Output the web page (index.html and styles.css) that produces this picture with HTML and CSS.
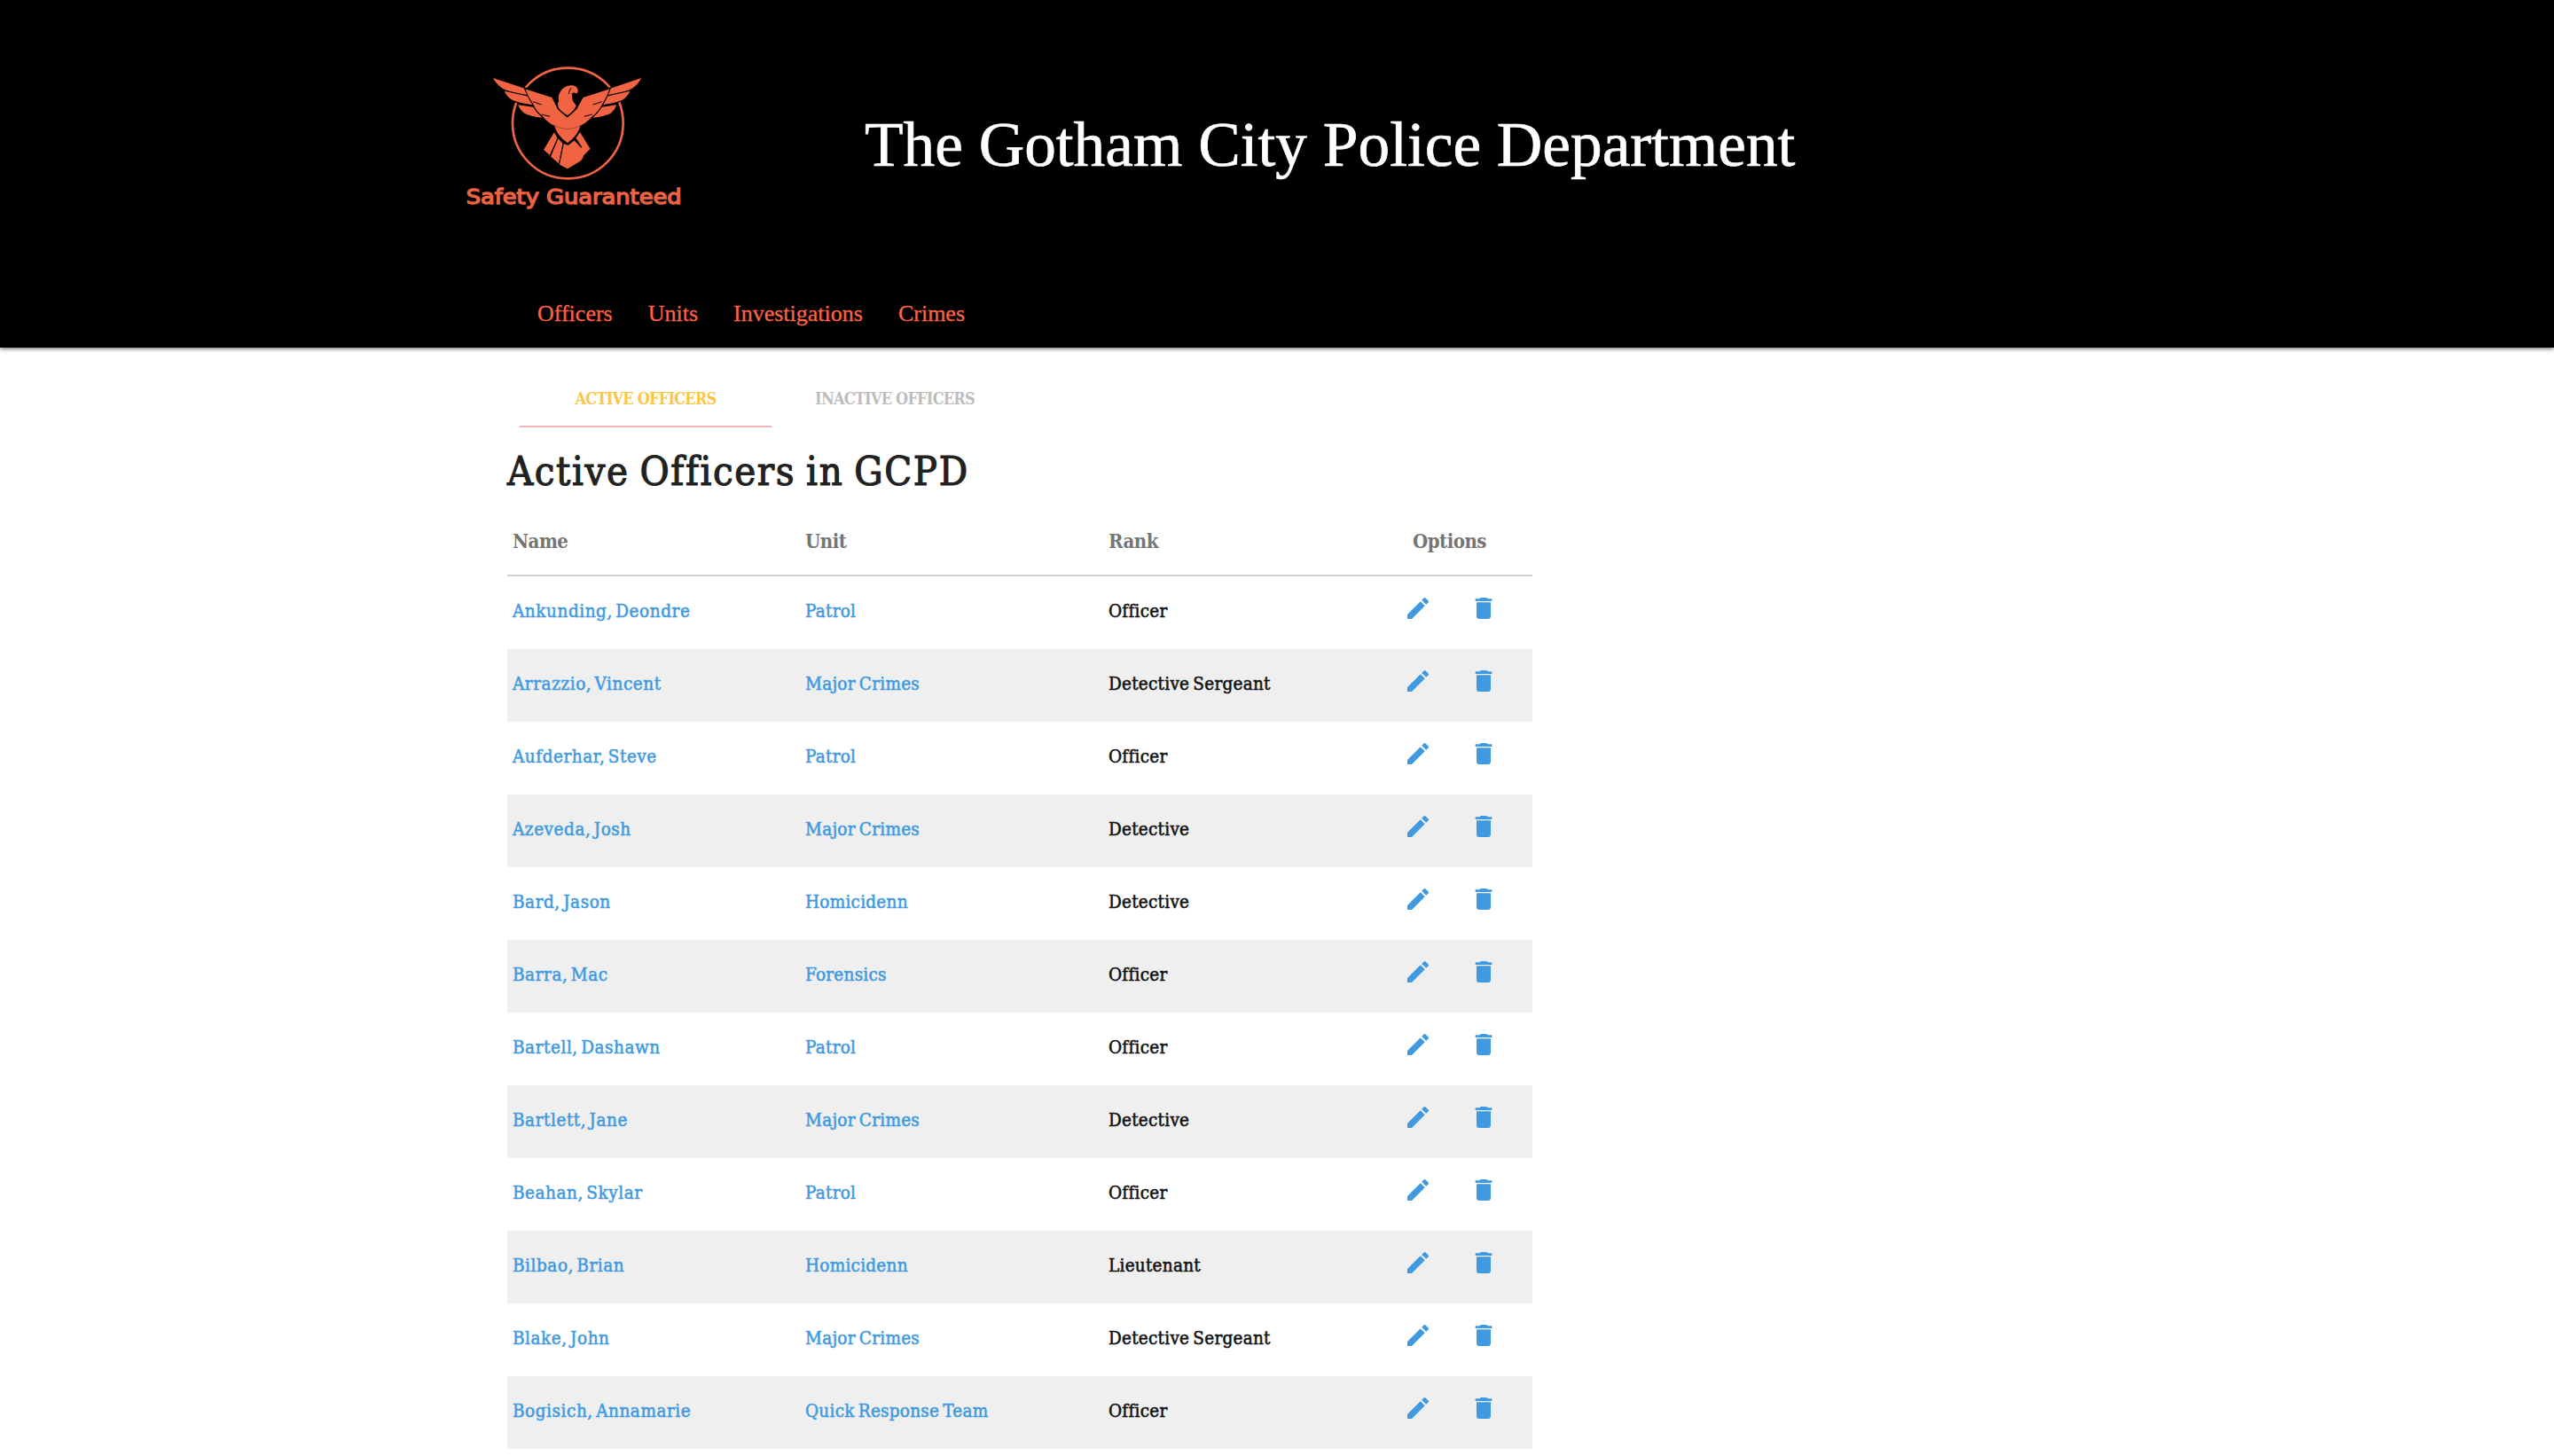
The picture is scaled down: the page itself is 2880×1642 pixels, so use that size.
FILE: index.html
```
<!DOCTYPE html>
<html lang="en">
<head>
<meta charset="utf-8">
<title>The Gotham City Police Department</title>
<link rel="stylesheet" href="styles.css">
</head>
<body>
<svg class="sprite" aria-hidden="true">
  <symbol id="edit" viewBox="0 0 24 24"><path d="M3 17.250V21h3.750L17.810 9.940l-3.750-3.750L3 17.250zM20.710 7.040c.39-.39.39-1.020 0-1.410l-2.340-2.340c-.39-.39-1.020-.39-1.410 0l-1.830 1.830 3.750 3.750 1.830-1.830z"/></symbol>
  <symbol id="trash" viewBox="0 0 24 24"><path d="M6 19c0 1.100.9 2 2 2h8c1.100 0 2-.9 2-2V7H6v12zM19 4h-3.500l-1-1h-5l-1 1H5v2h14V4z"/></symbol>
</svg>

<header class="site-header">
  <div class="brand">
    <svg class="logo" viewBox="0 0 840 570" role="img" aria-label="Safety Guaranteed">
      <circle cx="391" cy="237" r="187" fill="none" stroke="#f16443" stroke-width="8"/>
      <g stroke="#000" stroke-width="3.5" stroke-linejoin="round">
        <!-- outer feathers, left and right -->
        <path d="M134 81L248 118L262 148Q190 133 168 120Q147 105 134 81Z"/>
        <path d="M173 126L262 145L280 178Q222 170 202 160Q182 148 173 126Z"/>
        <path d="M220 172L278 181L308 221Q256 214 241 203Q225 190 220 172Z"/>
        <path d="M643 81L532 118L518 148Q590 133 611 120Q632 105 643 81Z"/>
        <path d="M604 126L518 145L500 178Q556 170 576 160Q596 148 604 126Z"/>
        <path d="M559 172L502 181L471 221Q525 214 539 203Q553 190 559 172Z"/>
        <!-- tail -->
        <path d="M345 264L358 288L330 348L307 327Z"/>
        <path d="M358 286L376 305L361 376L331 350Z"/>
        <path d="M376 304L391 310L413 293L437 318L416 287L432 264L469 324L446 347Q443 363 429 370L390 393L361 378Z"/>
        <!-- wings and body -->
        <path d="M244 118L338 148L358 188L389 216L420 188L442 148L535 118Q524 150 508 175Q496 199 474 216Q454 239 435 246Q427 280 390 306Q352 280 344 246Q323 239 302 212Q282 198 272 172Q255 148 244 118Z"/>
        <!-- head -->
        <path d="M357 184L355 168Q361 163 357 150Q360 127 377 115Q389 105 406 107Q426 109 427 126Q426 138 418 139Q414 132 406 137L409 160L421 177Q414 198 390 212Q368 201 357 184Z"/>
      </g>
      <g fill="none" stroke="#000" stroke-width="3">
        <path d="M402 118Q395 126 394 138M273 164L302 174M302 207L330 214M506 164L476 174M474 207L446 214"/>
        <path d="M346 245Q390 268 434 245" stroke="#8f3521" stroke-width="2"/>
      </g>
      <text class="tagline" x="47" y="510" textLength="729" lengthAdjust="spacingAndGlyphs">Safety Guaranteed</text>
    </svg>
    <h1 class="title">The Gotham City Police Department</h1>
  </div>
  <nav class="nav">
    <a>Officers</a><a>Units</a><a>Investigations</a><a>Crimes</a>
  </nav>
</header>

<main class="content">
  <div class="tabs">
    <a class="tab tab-active">ACTIVE OFFICERS</a>
    <a class="tab tab-inactive">INACTIVE OFFICERS</a>
  </div>
  <h2 class="heading">Active Officers in GCPD</h2>
  <table class="officers">
    <colgroup><col class="c-name"><col class="c-unit"><col class="c-rank"><col class="c-options"></colgroup>
    <thead><tr><th>Name</th><th>Unit</th><th>Rank</th><th class="options">Options</th></tr></thead>
    <tbody>
      <tr><td><a class="name">Ankunding, Deondre</a></td><td><a>Patrol</a></td><td>Officer</td><td class="actions"><svg><use href="#edit"/></svg><svg><use href="#trash"/></svg></td></tr>
      <tr><td><a class="name">Arrazzio, Vincent</a></td><td><a>Major Crimes</a></td><td>Detective Sergeant</td><td class="actions"><svg><use href="#edit"/></svg><svg><use href="#trash"/></svg></td></tr>
      <tr><td><a class="name">Aufderhar, Steve</a></td><td><a>Patrol</a></td><td>Officer</td><td class="actions"><svg><use href="#edit"/></svg><svg><use href="#trash"/></svg></td></tr>
      <tr><td><a class="name">Azeveda, Josh</a></td><td><a>Major Crimes</a></td><td>Detective</td><td class="actions"><svg><use href="#edit"/></svg><svg><use href="#trash"/></svg></td></tr>
      <tr><td><a class="name">Bard, Jason</a></td><td><a>Homicidenn</a></td><td>Detective</td><td class="actions"><svg><use href="#edit"/></svg><svg><use href="#trash"/></svg></td></tr>
      <tr><td><a class="name">Barra, Mac</a></td><td><a>Forensics</a></td><td>Officer</td><td class="actions"><svg><use href="#edit"/></svg><svg><use href="#trash"/></svg></td></tr>
      <tr><td><a class="name">Bartell, Dashawn</a></td><td><a>Patrol</a></td><td>Officer</td><td class="actions"><svg><use href="#edit"/></svg><svg><use href="#trash"/></svg></td></tr>
      <tr><td><a class="name">Bartlett, Jane</a></td><td><a>Major Crimes</a></td><td>Detective</td><td class="actions"><svg><use href="#edit"/></svg><svg><use href="#trash"/></svg></td></tr>
      <tr><td><a class="name">Beahan, Skylar</a></td><td><a>Patrol</a></td><td>Officer</td><td class="actions"><svg><use href="#edit"/></svg><svg><use href="#trash"/></svg></td></tr>
      <tr><td><a class="name">Bilbao, Brian</a></td><td><a>Homicidenn</a></td><td>Lieutenant</td><td class="actions"><svg><use href="#edit"/></svg><svg><use href="#trash"/></svg></td></tr>
      <tr><td><a class="name">Blake, John</a></td><td><a>Major Crimes</a></td><td>Detective Sergeant</td><td class="actions"><svg><use href="#edit"/></svg><svg><use href="#trash"/></svg></td></tr>
      <tr><td><a class="name">Bogisich, Annamarie</a></td><td><a>Quick Response Team</a></td><td>Officer</td><td class="actions"><svg><use href="#edit"/></svg><svg><use href="#trash"/></svg></td></tr>
    </tbody>
  </table>
</main>
</body>
</html>
```
FILE: styles.css
```
* { box-sizing: border-box; }

body {
  margin: 0;
  background: #fff;
  color: #111;
  font-family: "DejaVu Serif Condensed", "DejaVu Serif", serif;
  font-variant-ligatures: none;
}

.sprite { display: none; }

.site-header {
  height: 392px;
  background: #000;
  box-shadow: 0 1px 5px rgba(0, 0, 0, .65);
  font-family: "Liberation Serif", serif;
  font-variant-ligatures: normal;
}

.brand {
  display: flex;
  align-items: flex-start;
  height: 315px;
  padding: 60px 0 0 510px;
}

.logo {
  width: 280px;
  height: 190px;
  fill: #f16443;
}

.tagline {
  font: 500 68px "DejaVu Sans", sans-serif;
  fill: #ec6242;
  stroke: #ec6242;
  stroke-width: 4px;
}

.title {
  margin: 63px 0 0 185px;
  color: #fff;
  font-size: 71.3px;
  font-weight: 400;
  line-height: 80px;
  white-space: nowrap;
  -webkit-text-stroke: .7px;
}

.nav {
  display: flex;
  gap: 40px;
  padding-left: 606px;
  color: #ff6347;
  font-size: 26px;
  line-height: 78px;
  -webkit-text-stroke: .3px;
}

.content { padding-left: 572px; }

.tabs {
  display: flex;
  padding: 26px 0 0 14px;
}

.tab {
  width: 284px;
  height: 64px;
  border-bottom: 2px solid transparent;
  color: #bdbdbd;
  font-size: 18px;
  font-weight: 700;
  letter-spacing: -.78px;
  line-height: 63px;
  text-align: center;
}

.tab-active {
  border-color: #f0b4b7;
  color: #fbc547;
}

.tab-inactive { width: 278px; }

.heading {
  margin: 20px 0 10px;
  color: #212121;
  font-size: 45px;
  font-weight: 400;
  letter-spacing: 1.6px;
  line-height: 60px;
  word-spacing: -2.5px;
  -webkit-text-stroke: 1.1px;
}

.officers {
  width: 1156px;
  table-layout: fixed;
  border-spacing: 0;
}

.c-name { width: 330px; }
.c-unit { width: 342px; }
.c-rank { width: 337px; }
.c-options { width: 147px; }

th {
  height: 78px;
  padding: 0 0 0 6px;
  border-bottom: 2px solid #d0d0d0;
  color: #757575;
  font-size: 22px;
  letter-spacing: -.5px;
  text-align: left;
}

th.options { padding-left: 12px; }

td {
  height: 82px;
  padding: 0 0 5px 6px;
  font-size: 20.5px;
  letter-spacing: .25px;
  word-spacing: -2px;
  white-space: nowrap;
  -webkit-text-stroke: .55px;
}

tbody tr:nth-child(even) { background: #efefef; }

td a { color: #3f9ae1; }

.name {
  letter-spacing: .55px;
  word-spacing: -3px;
}

td.actions {
  padding: 0 0 10px 2px;
  font-size: 0;
}

.actions svg {
  width: 32px;
  height: 32px;
  fill: #3f9ae1;
  stroke: none;
  vertical-align: middle;
}

.actions svg + svg { margin-left: 42px; }
```
